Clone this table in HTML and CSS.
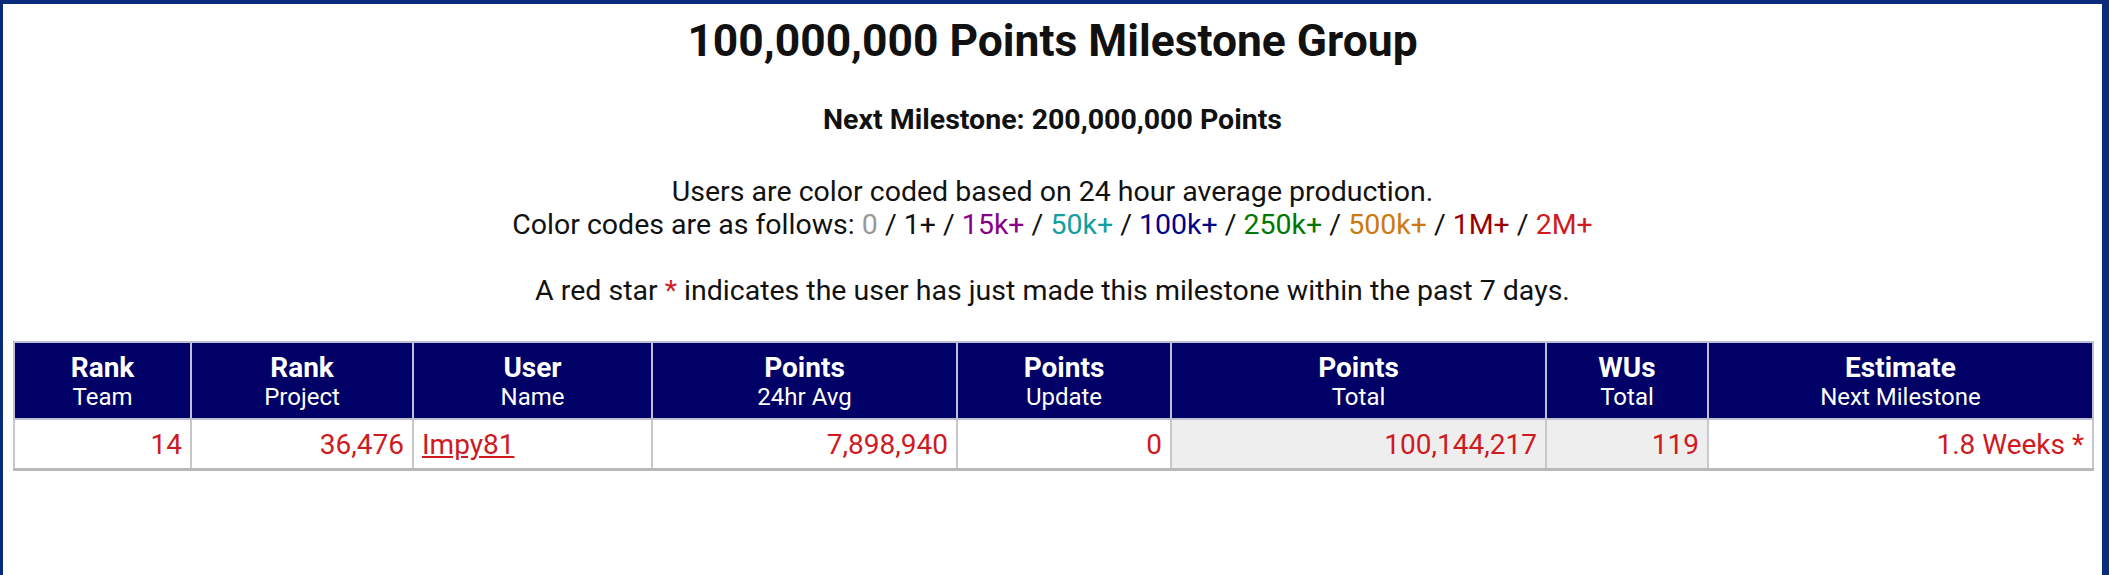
FILE: index.html
```html
<!DOCTYPE html>
<html>
<head>
<meta charset="utf-8">
<title>100,000,000 Points Milestone Group</title>
<link rel="stylesheet" href="styles.css">
</head>
<body>
<div class="frame">
  <h1 class="title">100,000,000 Points Milestone Group</h1>
  <h3 class="next">Next Milestone: 200,000,000 Points</h3>
  <p class="legend">
    Users are color coded based on 24 hour average production.<br>
    Color codes are as follows: <span class="c0">0</span> / <span class="c1">1+</span> / <span class="c15k">15k+</span> / <span class="c50k">50k+</span> / <span class="c100k">100k+</span> / <span class="c250k">250k+</span> / <span class="c500k">500k+</span> / <span class="c1m">1M+</span> / <span class="c2m">2M+</span><br>
    <br>
    A red star <span class="star">*</span> indicates the user has just made this milestone within the past 7 days.
  </p>
  <table class="stats">
    <colgroup>
      <col class="w-team">
      <col class="w-project">
      <col class="w-user">
      <col class="w-avg">
      <col class="w-update">
      <col class="w-total">
      <col class="w-wus">
      <col class="w-est">
    </colgroup>
    <thead>
      <tr>
        <th><span class="h1">Rank</span><span class="h2">Team</span></th>
        <th><span class="h1">Rank</span><span class="h2">Project</span></th>
        <th><span class="h1">User</span><span class="h2">Name</span></th>
        <th><span class="h1">Points</span><span class="h2">24hr Avg</span></th>
        <th><span class="h1">Points</span><span class="h2">Update</span></th>
        <th><span class="h1">Points</span><span class="h2">Total</span></th>
        <th><span class="h1">WUs</span><span class="h2">Total</span></th>
        <th><span class="h1">Estimate</span><span class="h2">Next Milestone</span></th>
      </tr>
    </thead>
    <tbody>
      <tr class="c2m">
        <td class="num">14</td>
        <td class="num">36,476</td>
        <td class="name"><a href="#" class="c2m">Impy81</a></td>
        <td class="num">7,898,940</td>
        <td class="num">0</td>
        <td class="num shaded">100,144,217</td>
        <td class="num shaded">119</td>
        <td class="num">1.8 Weeks <span class="star">*</span></td>
      </tr>
    </tbody>
  </table>
</div>
</body>
</html>
```

FILE: styles.css
```css
html, body {
  margin: 0;
  padding: 0;
  background: #ffffff;
}

body {
  font-family: Roboto, "Liberation Sans", Arial, sans-serif;
  color: #111111;
}

.frame {
  box-sizing: border-box;
  height: 575px;
  border-top: 4px solid #0a2b7a;
  border-left: 3px solid #0a2b7a;
  border-right: 7px solid #0a2b7a;
  padding: 11px 10px 0 10px;
  text-align: center;
}

.title {
  margin: 0;
  font-size: 44.4px;
  font-weight: 700;
  line-height: 52px;
}

.next {
  margin: 36px 0 0 0;
  font-size: 28.5px;
  font-weight: 700;
  line-height: 33px;
}

.legend {
  margin: 39px 0 0 0;
  font-size: 28.5px;
  line-height: 33px;
}

.c0 { color: #999999; }
.c1 { color: #111111; }
.c15k { color: #880088; }
.c50k { color: #11a0a0; }
.c100k { color: #000088; }
.c250k { color: #007700; }
.c500k { color: #cc7a10; }
.c1m { color: #990000; }
.c2m { color: #cf1a1f; }
.star { color: #d41a1a; }

.stats {
  margin-top: 34px;
  width: 100%;
  table-layout: fixed;
  border-collapse: collapse;
  border-bottom: 3px solid #b8b8b8;
}

.w-team { width: 177px; }
.w-project { width: 222px; }
.w-user { width: 239px; }
.w-avg { width: 305px; }
.w-update { width: 214px; }
.w-total { width: 375px; }
.w-wus { width: 162px; }
.w-est { width: 385px; }

.stats th {
  background: #000066;
  color: #ffffff;
  border: 2px solid #c0c0d4;
  padding: 9px 6px 7px 6px;
  text-align: center;
  font-weight: 400;
}

.stats th .h1 {
  display: block;
  font-size: 28px;
  font-weight: 700;
  line-height: 31px;
}

.stats th .h2 {
  display: block;
  font-size: 24px;
  line-height: 28px;
}

.stats td {
  border: 2px solid #c8c8cc;
  padding: 9px 8px 8px 8px;
  font-size: 28px;
  line-height: 31px;
}

.stats td.num {
  text-align: right;
}

.stats td.name {
  text-align: left;
}

.stats td.shaded {
  background: #eeeeee;
}

.stats a {
  text-decoration: underline;
}
```
